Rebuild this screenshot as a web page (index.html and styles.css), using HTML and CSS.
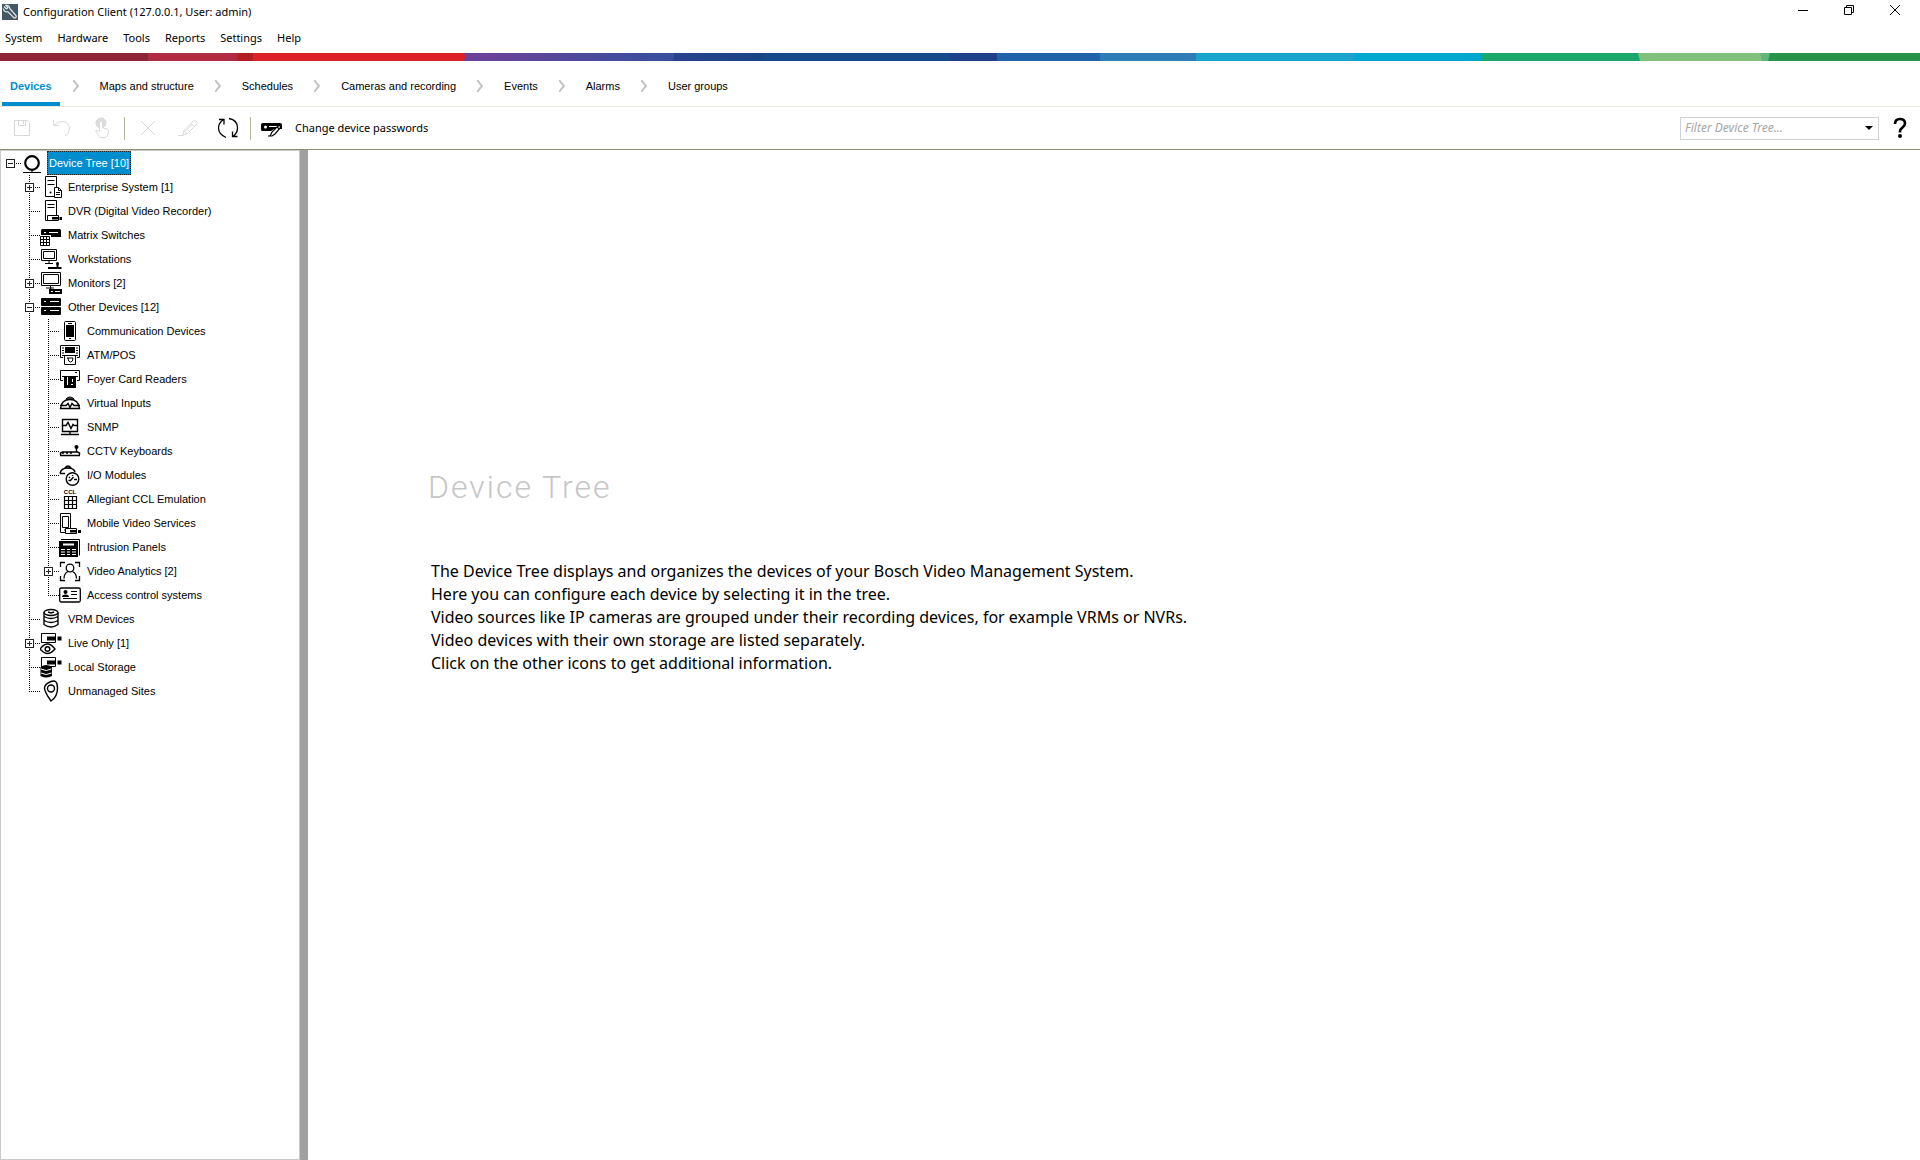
FILE: index.html
```html
<!DOCTYPE html>
<html lang="en">
<head>
<meta charset="utf-8">
<title>Configuration Client</title>
<link rel="stylesheet" href="styles.css">
</head>
<body>
<header class="titlebar">
  <svg class="app-icon" width="16" height="16" viewBox="0 0 16 16"><rect width="16" height="16" fill="#465764"/><path d="M2 2.500 4.500 5 6 3.500 3.800 1.300Q7.500.8 7.800 4.500L14 11.500Q15 14 12 14L6 7.800Q2 8.500 1.300 4.500" fill="none" stroke="#e8ecef" stroke-width="1.200"/></svg>
  <h1 class="title">Configuration Client (127.0.0.1, User: admin)</h1>
  <div class="window-controls">
    <button type="button" aria-label="Minimize"><svg width="12" height="12" viewBox="0 0 12 12"><path d="M1 6.500h10"/></svg></button>
    <button type="button" aria-label="Restore"><svg width="12" height="12" viewBox="0 0 12 12"><path d="M1.500 3.500h7v7h-7zM3.500 3v-1.500h7v7H9"/></svg></button>
    <button type="button" aria-label="Close"><svg width="12" height="12" viewBox="0 0 12 12"><path d="M1 1l10 10M11 1 1 11"/></svg></button>
  </div>
</header>
<nav class="menubar" aria-label="Main menu">
  <button type="button">System</button><button type="button">Hardware</button><button type="button">Tools</button><button type="button">Reports</button><button type="button">Settings</button><button type="button">Help</button>
</nav>
<svg class="band" viewBox="0 0 1920 8" preserveAspectRatio="none" aria-hidden="true">
  <defs><linearGradient id="violet"><stop offset="0" stop-color="#704198"/><stop offset="1" stop-color="#364f9f"/></linearGradient><linearGradient id="navy"><stop offset="0" stop-color="#28438d"/><stop offset="1" stop-color="#184684"/></linearGradient></defs>
  <path fill="#8e2437" d="M0 0h149v8H0z"/><path fill="#b02a42" d="M148 0h91v8h-91z"/><path fill="#b01f24" d="M237 0h17v8h-17l1-4z"/>
  <path fill="url(#violet)" d="M460 0h214v8H460z"/><path fill="#dc2227" d="M253 0h211l1 4-1 4H253z"/>
  <path fill="url(#navy)" d="M674 0h93v8h-94l1-4z"/><path fill="#164a8a" d="M765 0h187v8H765z"/><path fill="#21408c" d="M950 0h48v8h-48z"/>
  <path fill="#2063aa" d="M997 0h104v8H997z"/><path fill="#2e7db8" d="M1100 0h97v8h-97z"/><path fill="#1aa3cb" d="M1196 0h160v8h-160z"/><path fill="#00a8d0" d="M1355 0h127v8h-127z"/>
  <path fill="#19a76b" d="M1481 0h160v8h-160z"/><path fill="#81c07a" d="M1638 0h126v8h-124z"/><path fill="#5db57a" d="M1760 0h12v8h-10z"/><path fill="#28934b" d="M1770 0h150v8h-152z"/>
</svg>
<nav class="steps" aria-label="Configuration pages">
  <a class="step current" href="#devices">Devices</a>
  <svg class="chevron" width="6" height="12" viewBox="0 0 6 12"><path d="M0 0l5 6-5 6"/></svg>
  <a class="step" href="#maps">Maps and structure</a>
  <svg class="chevron" width="6" height="12" viewBox="0 0 6 12"><path d="M0 0l5 6-5 6"/></svg>
  <a class="step" href="#schedules">Schedules</a>
  <svg class="chevron" width="6" height="12" viewBox="0 0 6 12"><path d="M0 0l5 6-5 6"/></svg>
  <a class="step" href="#cameras">Cameras and recording</a>
  <svg class="chevron" width="6" height="12" viewBox="0 0 6 12"><path d="M0 0l5 6-5 6"/></svg>
  <a class="step" href="#events">Events</a>
  <svg class="chevron" width="6" height="12" viewBox="0 0 6 12"><path d="M0 0l5 6-5 6"/></svg>
  <a class="step" href="#alarms">Alarms</a>
  <svg class="chevron" width="6" height="12" viewBox="0 0 6 12"><path d="M0 0l5 6-5 6"/></svg>
  <a class="step" href="#groups">User groups</a>
</nav>
<div class="toolbar">
  <button class="tool" type="button" aria-label="Save" disabled><svg width="22" height="22" viewBox="0 0 22 22"><path d="M3.500 3.500h13l2 2v13h-15zM7.500 3.500v5h7v-5M12.500 4v3"/></svg></button>
  <button class="tool" type="button" aria-label="Undo" disabled><svg width="22" height="22" viewBox="0 0 22 22"><path d="M2.500 3v5.500H8M3 8Q7 4 12 4.500 18.500 6 18.500 12 18 17 14 19"/></svg></button>
  <button class="tool" type="button" aria-label="Activate configuration" disabled><svg width="22" height="22" viewBox="0 0 22 22"><circle cx="10" cy="6" r="5" fill="#dcdcdc"/><path fill="#fff" d="M8.500 14V5q1.500-2 3 0v6l5 1q1.500 1 1 3-.5 4-3 5.500h-5L4.500 14q1-2 4 1"/></svg></button>
  <span class="separator"></span>
  <button class="tool" type="button" aria-label="Delete" disabled><svg width="22" height="22" viewBox="0 0 22 22"><path d="M4 4l14 14M18 4 4 18"/></svg></button>
  <button class="tool" type="button" aria-label="Edit" disabled><svg width="22" height="22" viewBox="0 0 22 22"><path d="M1 18.500h5l1-5L16.500 4q1-1 2.500 0t1 3L10 17l-4 1M7 13.500l3 3.500M14 6.500l3.500 3.500M8.500 14l7-7"/></svg></button>
  <button class="tool" type="button" aria-label="Refresh"><svg width="22" height="22" viewBox="0 0 22 22"><path stroke-width="1.300" d="M9 20.500Q1.500 17 1.500 11 1.500 6 6.500 2.500M12 1.500Q20.500 3 20.500 11 20.500 16 16 19.500M2 2.500H7V7.500M20.500 19.500H15.500V14.500"/></svg></button>
  <span class="separator"></span>
  <button class="tool wide" type="button"><svg width="22" height="22" viewBox="0 0 22 22"><path fill="#000" stroke="none" d="M1 8q0-2 2-2h17q2 0 2 2v4h-8l-3 2H2q-1 0-1-2z"/><circle cx="5.500" cy="10" r="1.500" fill="#fff" stroke="none"/><path stroke="#fff" d="M9 9.500h8"/><path fill="#fff" stroke-width="1.200" d="M10 19l2-4 6-6q2-1 3 1l-6 7-3 2H8M17 10l2.500 2"/></svg><span>Change device passwords</span></button>
  <div class="filter">
    <input type="text" aria-label="Filter Device Tree" placeholder="Filter Device Tree...">
    <button type="button" aria-label="Show recent filters"><svg width="8" height="4" viewBox="0 0 8 4"><path d="M0 0h8L4 4z"/></svg></button>
  </div>
  <button class="help" type="button" aria-label="Help"><svg width="14" height="22" viewBox="0 0 14 22"><path d="M2 7Q2 2 7 2t5 4.500q0 2-2.500 4T7 14v1.500" fill="none" stroke="#000" stroke-width="2.600"/><circle cx="7" cy="19" r="2"/></svg></button>
</div>
<main class="workspace">
  <aside class="tree-panel">
    <ul class="tree">
      <li>
        <div class="row root"><span class="cell"><button class="toggle" type="button" aria-label="Collapse Device Tree"></button></span><svg viewBox="0 0 22 24"><circle cx="11" cy="12" r="6.800" stroke-width="2.200"/><path d="M2 21.500h18M11 19v3"/></svg><span class="label selected">Device Tree [10]</span></div>
        <ul>
          <li><div class="row"><span class="cell"><button class="toggle closed" type="button" aria-label="Expand Enterprise System"></button></span><svg viewBox="0 0 22 24"><path d="M5.500 1.500h11v20h-11zM7.500 5.500h7M7.500 9.500h7"/><circle class="solid" cx="10.500" cy="17.500" r="1"/><path fill="#fff" d="M14.500 12.500h4l3 3v7h-7zM18.500 13v2.500h3M16 17.500h4M16 19.500h4"/></svg><span class="label">Enterprise System [1]</span></div></li>
          <li><div class="row"><span class="cell"></span><svg viewBox="0 0 22 24"><path d="M5.500 1.500h11v20h-11zM7.500 5.500h7M7.500 8.500h7"/><path fill="#fff" d="M7.500 16.500h11v5h-11z"/><path class="solid" d="M12 18h6v2.500h-6zM19.500 18H22v3h-2.500z"/></svg><span class="label">DVR (Digital Video Recorder)</span></div></li>
          <li><div class="row"><span class="cell"></span><svg viewBox="0 0 22 24"><path class="solid" d="M2 6h18l1 1v7H11v-2H1V7z"/><path class="cut" d="M4 9.500h2M9 9.500h9"/><path fill="#fff" d="M.5 13.500h9v9h-9zM3.500 13.500v9M6.500 13.500v9M.5 16.500h9M.5 19.500h9"/></svg><span class="label">Matrix Switches</span></div></li>
          <li><div class="row"><span class="cell"></span><svg viewBox="0 0 22 24"><path d="M1.500 2.500h15v11h-15zM3.500 4.500h11v7h-11zM9 14v3M5 16.500h8"/><path d="M8 21h13.500M17.500 17v4" stroke-width="2"/><circle class="solid" cx="17.500" cy="16.500" r="1.500"/></svg><span class="label">Workstations</span></div></li>
          <li><div class="row"><span class="cell"><button class="toggle closed" type="button" aria-label="Expand Monitors"></button></span><svg viewBox="0 0 22 24"><path d="M1.500 1.500h19v13h-19zM3.500 3.500h15v9h-15zM10.500 15v3M6 17h8"/><path class="solid" d="M9 18h13v5H9z"/><path class="cut" d="M11 20.500h2M15 20.500h5"/></svg><span class="label">Monitors [2]</span></div></li>
          <li>
            <div class="row"><span class="cell"><button class="toggle" type="button" aria-label="Collapse Other Devices"></button></span><svg viewBox="0 0 22 24"><rect class="solid" x="1" y="3" width="20" height="8" rx="1"/><rect class="solid" x="1" y="12" width="20" height="8" rx="1"/><path class="cut" d="M4 6.500h2M10 6.500h9M4 15.500h2M10 15.500h9"/></svg><span class="label">Other Devices [12]</span></div>
            <ul>
              <li><div class="row"><span class="cell"></span><svg viewBox="0 0 22 24"><rect x="5.500" y="2.500" width="11" height="19" rx="1"/><path class="solid" d="M7 6h8v12H7z"/><path d="M9 4.500h4M10 19.500h2"/></svg><span class="label">Communication Devices</span></div></li>
              <li><div class="row"><span class="cell"></span><svg viewBox="0 0 22 24"><path d="M4 14.500H1.500v-12h19v12H18M3 5h2M3 7.500h2M3 10h2M17 5h2M17 7.500h2M17 10h2"/><path class="solid" d="M6 4h10v6H6z"/><path d="M3 12.500h16M5.500 13v8.500h11V13M8 15h6M9 15q0 4 2.500 4T14 15"/></svg><span class="label">ATM/POS</span></div></li>
              <li><div class="row"><span class="cell"></span><svg viewBox="0 0 22 24"><path d="M4 13.500H1.500v-10h19v10H18M3 9.500h16M16 5.500h2"/><path class="solid" d="M5 9h12v12H5z"/><path class="cut" d="M8.500 10v8M13.500 12v3M12 17.500h2"/></svg><span class="label">Foyer Card Readers</span></div></li>
              <li><div class="row"><span class="cell"></span><svg viewBox="0 0 22 24"><path d="M1.500 17.500q1-9 9.500-9t9.500 9zM1 14.500h6l2-2 2 4 2-4 2 2h6" stroke-width="1.400"/><path d="M7 8q4-4 8 0z" fill="#777"/></svg><span class="label">Virtual Inputs</span></div></li>
              <li><div class="row"><span class="cell"></span><svg viewBox="0 0 22 24"><path stroke-width="1.400" d="M3.500 4.500h15v12h-15zM11 17v2.500M2 19.500h18M4 10.500h3l2-3 3 6 2-4 1 1h3"/></svg><span class="label">SNMP</span></div></li>
              <li><div class="row"><span class="cell"></span><svg viewBox="0 0 22 24"><path stroke-width="1.400" d="M1 16.500h20M1.500 16v-2l2-1h15l2 1v2M3 14h2M7 14h2M11 14h2M17.500 8v5"/><circle class="solid" cx="17.500" cy="8" r="2"/></svg><span class="label">CCTV Keyboards</span></div></li>
              <li><div class="row"><span class="cell"></span><svg viewBox="0 0 22 24"><path stroke-width="1.400" d="M1 10.500q1-5.500 7.500-5.500T16 9M1 10.500h5M6 5q3-4 6 0z"/><circle cx="13.500" cy="16" r="6.300" fill="#fff" stroke-width="1.400"/><path stroke-width="1.400" d="M9.500 17.500h2l3-3.500M15 16.500h3M10 14l1 1M13.500 12v1"/></svg><span class="label">I/O Modules</span></div></li>
              <li><div class="row"><span class="cell"></span><svg viewBox="0 0 22 24"><text x="11" y="7" class="tiny">CCL</text><path stroke-width="1.200" d="M5.500 9.500h12v12h-12zM9.500 9.500v12M13.500 9.500v12M5.500 13.500h12M5.500 17.500h12"/></svg><span class="label">Allegiant CCL Emulation</span></div></li>
              <li><div class="row"><span class="cell"></span><svg viewBox="0 0 22 24"><path d="M1.500 2.500h10v19h-10zM3.500 5.500h6v11h-6zM5 19h3"/><path fill="#fff" d="M6.500 17.500h11v5h-11z"/><path class="solid" d="M11 19h6v2.500h-6zM19 19h3v3h-3z"/></svg><span class="label">Mobile Video Services</span></div></li>
              <li><div class="row"><span class="cell"></span><svg viewBox="0 0 22 24"><path d="M2 4.500h18.500v16"/><path class="solid" d="M0 6h19v16H0z"/><path class="cut" stroke-width="2" d="M4 9.500h11"/><path class="cut" d="M2 14.500h4M8 14.500h3M13 14.500h4M2 17h4M8 17h3M13 17h4M2 19.500h4M8 19.500h3M13 19.500h4"/></svg><span class="label">Intrusion Panels</span></div></li>
              <li><div class="row"><span class="cell"><button class="toggle closed" type="button" aria-label="Expand Video Analytics"></button></span><svg viewBox="0 0 22 24"><path stroke-width="1.300" d="M1.500 8V3.500H6M16 3.500h4.500V8M20.500 17v4.500H16M6 21.500H1.500V17"/><circle cx="11" cy="9" r="3.800" stroke-width="1.300"/><path stroke-width="1.300" d="M5 19.500q0-5 4-7M13.500 12.500q4 2 4 7"/></svg><span class="label">Video Analytics [2]</span></div></li>
              <li><div class="row"><span class="cell"></span><svg viewBox="0 0 22 24"><rect x=".7" y="5" width="20.600" height="14" rx="1.500" stroke-width="1.300"/><circle class="solid" cx="6.500" cy="9" r="2"/><path class="solid" d="M3 14q0-2.500 3.500-2.500T10 14z"/><path d="M12 8.500h6M12 11.500h6M4 15.500h14"/></svg><span class="label">Access control systems</span></div></li>
            </ul>
          </li>
          <li><div class="row"><span class="cell"></span><svg viewBox="0 0 22 24"><ellipse cx="11" cy="5.500" rx="7" ry="3" stroke-width="1.400"/><path stroke-width="1.400" d="M4 5.500v12q7 5 14 0v-12M4 9.500q7 4 14 0M4 13.500q7 4 14 0M8 5l3 1 3-1"/></svg><span class="label">VRM Devices</span></div></li>
          <li><div class="row"><span class="cell"><button class="toggle closed" type="button" aria-label="Expand Live Only"></button></span><svg viewBox="0 0 22 24"><path d="M1.500 2.500h14v9h-14z"/><path class="solid" d="M7 5.500h9v4H7zM17.500 5.500h4v4h-4z"/><path fill="#fff" stroke-width="1.300" d="M0 18q7.500-10 15 0-7.500 9-15 0z"/><circle cx="7.500" cy="18" r="2.300" stroke-width="1.500"/></svg><span class="label">Live Only [1]</span></div></li>
          <li><div class="row"><span class="cell"></span><svg viewBox="0 0 22 24"><path d="M1.500 2.500h14v9h-14z"/><path class="solid" d="M7 5.500h9v4H7zM17.500 5.500h4v4h-4zM.5 12q5.500-4 11.500 0v9q-6 3-11.500 0z"/><path class="cut" d="M1 14q5 3 10.500 0M1 18q5 3 10.500 0"/></svg><span class="label">Local Storage</span></div></li>
          <li><div class="row"><span class="cell"></span><svg viewBox="0 0 22 24"><path stroke-width="1.400" d="M11 22Q4.500 13 4.500 9t6.500-6.500T17.500 9 11 22z"/><circle cx="11" cy="9.500" r="3.500" stroke-width="1.400"/></svg><span class="label">Unmanaged Sites</span></div></li>
        </ul>
      </li>
    </ul>
  </aside>
  <div class="splitter" role="separator" aria-orientation="vertical"></div>
  <section class="content">
    <h2>Device Tree</h2>
    <p>The Device Tree displays and organizes the devices of your Bosch Video Management System.<br>Here you can configure each device by selecting it in the tree.<br>Video sources like IP cameras are grouped under their recording devices, for example VRMs or NVRs.<br>Video devices with their own storage are listed separately.<br>Click on the other icons to get additional information.</p>
  </section>
</main>
</body>
</html>
```
FILE: styles.css
```css
* { box-sizing: border-box; }
body { margin: 0; min-height: 100vh; display: flex; flex-direction: column; background: #fff; color: #000; font: 11px/16px "Liberation Sans", Arial, sans-serif; }
button { border: 0; padding: 0; background: none; color: inherit; font: inherit; }
svg { display: block; flex: none; }

.titlebar { display: flex; align-items: center; height: 23px; padding: 0 2px; }
.title { flex: 1; margin: 0 0 0 5px; font: 11px/16px "Noto Sans", sans-serif; }
.window-controls { display: flex; align-self: start; }
.window-controls button { display: flex; align-items: center; justify-content: center; width: 46px; height: 20px; }
.window-controls path { fill: none; stroke: #000; }

.menubar { display: flex; align-items: center; gap: 15px; height: 30px; padding: 0 5px; font: 11px/16px "Noto Sans", sans-serif; }
.band { width: 100%; height: 8px; }

.steps { display: flex; align-items: center; gap: 21px; height: 46px; padding: 4px 2px 0; border-bottom: 1px solid #e9e9dc; }
.step { color: #000; text-decoration: none; }
.current { display: flex; align-items: center; align-self: stretch; margin-right: -8px; padding: 4px 8px 0; border-bottom: 4px solid #008ecf; color: #008ecf; font-weight: bold; }
.chevron path { fill: none; stroke: #bfc3c6; stroke-width: 2; }

.toolbar { display: flex; align-items: center; height: 43px; padding: 0 13px 0 2px; border-bottom: 1px solid #8f8f72; font: 11px/16px "Noto Sans", sans-serif; }
.tool { display: flex; justify-content: center; align-items: center; width: 40px; height: 32px; }
.tool svg { fill: none; stroke: #000; }
.tool:disabled svg { stroke: #d9d9d9; }
.tool.wide { width: auto; padding: 0 6px; gap: 13px; }
.separator { width: 2px; height: 23px; margin: 0 2px; border-left: 1px solid #b5b5a0; }
.filter { display: flex; align-items: center; width: 199px; height: 23px; margin-left: auto; border: 1px solid #cdd3d8; }
.filter input { flex: 1; min-width: 0; border: 0; padding: 0 4px; outline: 0; background: none; font: italic 12px/16px "Noto Sans", sans-serif; }
.filter input::placeholder { color: #a5a5a5; opacity: 1; }
.filter button { padding: 6px 5px; }
.help { margin-left: 14px; }

.workspace { flex: 1; display: flex; align-items: stretch; }
.tree-panel { width: 300px; flex: none; border: 1px solid #c9c9c9; }
.tree, .tree ul { margin: 0; padding: 0; list-style: none; }
.tree ul { padding-left: 19px; }
.tree ul > li { background: repeating-linear-gradient(#000 0 1px, transparent 1px 2px) 9px 0 / 1px 100% no-repeat; }
.tree ul > li:last-child { background-size: 1px 13px; }
.row { display: flex; align-items: center; height: 24px; background: repeating-linear-gradient(90deg, #000 0 1px, transparent 1px 2px) 9px 12px / 11px 1px no-repeat; }
.cell { flex: none; width: 20px; padding-left: 5px; }
.toggle { display: block; width: 9px; height: 9px; border: 1px solid #222; background: linear-gradient(#222, #222) center / 5px 1px no-repeat #fff; }
.toggle.closed { background: linear-gradient(#222, #222) center / 5px 1px no-repeat, linear-gradient(#222, #222) center / 1px 5px no-repeat #fff; }
.row svg { width: 22px; height: 24px; fill: none; stroke: #000; }
.row .solid { fill: #000; stroke: none; }
.row .cut { stroke: #fff; }
.row .tiny { font: bold 6px "Liberation Sans", sans-serif; text-anchor: middle; fill: #000; stroke: none; }
.label { margin-left: 4px; padding: 0 2px; line-height: 24px; white-space: nowrap; }
.selected { background: #008ecf; color: #fff; outline: 1px dotted #222; outline-offset: -1px; }
.splitter { width: 8px; flex: none; background: #a0a0a0; }
.content { flex: 1; min-width: 0; padding: 317px 24px 24px 120px; }
.content h2 { margin: 0 0 53px; font: 300 32px/40px Roboto, sans-serif; letter-spacing: 2px; color: #c6c6c6; }
.content p { margin: 0; padding-left: 3px; font: 16px/23px "Noto Sans", sans-serif; }
```
